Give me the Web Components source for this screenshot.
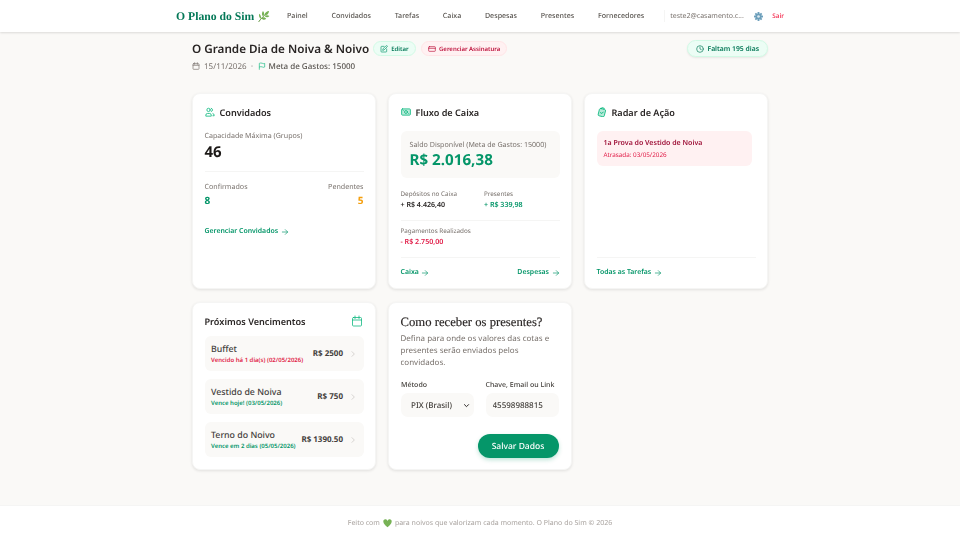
<!DOCTYPE html>
<html lang="pt-BR">
<head>
<meta charset="utf-8">
<title>O Plano do Sim</title>
<style>
  html, body { margin: 0; padding: 0; height: 100%; }
  body {
    background: #faf9f7;
    color: #292524;
    font-family: "Noto Sans", sans-serif;
    text-rendering: geometricPrecision;
    display: flex;
    flex-direction: column;
    min-height: 540px;
    overflow: hidden;
  }
  main-area { flex: 1; display: block; }
  /* the reference is a soft, downscaled capture */
  top-nav, main-area, page-foot { filter: blur(.3px); }
</style>
</head>
<body>
<top-nav></top-nav>
<main-area>
  <page-head></page-head>
  <div style="display:grid;grid-template-columns:repeat(3,184px);gap:13px 12px;width:576px;margin:0 auto;align-items:start">
    <guests-card></guests-card>
    <cash-card></cash-card>
    <radar-card></radar-card>
    <due-card></due-card>
    <gift-card></gift-card>
  </div>
</main-area>
<page-foot></page-foot>

<script>
const ICONS = {
  users: '<path d="M15 21v-1.5a4 4 0 0 0-4-4H6a4 4 0 0 0-4 4V21z"/><circle cx="8.5" cy="7" r="4"/><path d="M19 21h3v-1.5a4 4 0 0 0-3-3.87"/><path d="M15 3.13a4 4 0 0 1 0 7.75"/>',
  money: '<rect x="1.5" y="4.5" width="21" height="15" rx="2" fill="rgba(16,185,129,.28)"/><circle cx="12" cy="12" r="3.5"/><path d="M5.5 8.5h.01M18.5 15.5h.01"/>',
  tasks: '<g transform="rotate(14 12 12)"><rect x="4.5" y="4.5" width="15" height="18" rx="3" fill="rgba(16,185,129,.3)"/><path d="M9 4.5V2h6v2.5"/><path d="m9 14 2 2 4-4"/></g>',
  cal: '<rect x="3" y="5" width="18" height="17" rx="2"/><path d="M16 2v5M8 2v5M3 10h18"/>',
  edit: '<path d="M12 4H5a2 2 0 0 0-2 2v13a2 2 0 0 0 2 2h13a2 2 0 0 0 2-2v-7"/><path d="M18.5 2.5a2.1 2.1 0 0 1 3 3L12 15l-4 1 1-4z"/>',
  card: '<rect x="2" y="5" width="20" height="14" rx="2"/><path d="M2 10h20"/>',
  clock: '<circle cx="12" cy="12" r="10"/><path d="M12 6v6l4 2"/>',
  flag: '<path d="M4 22V4s2-1 5-1 5 2 8 2 3-1 3-1v11s-1 1-3 1-5-2-8-2-5 1-5 1"/>',
  arrow: '<path d="M4 12h16M13 5l7 7-7 7"/>',
  chev: '<path d="m9 5 7 7-7 7"/>',
  down: '<path d="m5 9 7 7 7-7"/>'
};
const icon = (name, size, color, sw = 2) =>
  `<svg width="${size}" height="${size}" viewBox="0 0 24 24" fill="none" stroke="${color}" stroke-width="${sw}" stroke-linecap="round" stroke-linejoin="round" style="flex:none;display:block">${ICONS[name]}</svg>`;

const CARD_CSS = `
  :host {
    display: flex;
    flex-direction: column;
    box-sizing: border-box;
    background: #fff;
    border: 1px solid #f5f5f4;
    border-radius: 8px;
    box-shadow: 0 1px 3px rgba(0,0,0,.1);
    padding: 10px 11.5px 10px;
    font-family: "Noto Sans", sans-serif;
    color: #292524;
  }
  .title { display: flex; align-items: center; gap: 5px; font-size: 9.1px; font-weight: 600; height: 16px; color: #292524; }
  .lbl { font-size: 7.1px; color: #78716c; line-height: 11px; }
  .link { display: flex; align-items: center; gap: 2.5px; font-size: 6.9px; font-weight: 600; color: #059669; line-height: 11px; }
  hr { border: 0; border-top: 1px solid #f5f5f4; margin: 0; }
`;

class TopNav extends HTMLElement {
  connectedCallback() {
    const links = ['Painel', 'Convidados', 'Tarefas', 'Caixa', 'Despesas', 'Presentes', 'Fornecedores'];
    this.attachShadow({ mode: 'open' }).innerHTML = `
      <style>
        :host { display: flex; justify-content: center; height: 32px; background: #fff; box-shadow: 0 1px 2px rgba(0,0,0,.12); font-family: "Noto Sans", sans-serif; position: relative; }
        .in { width: 608px; display: flex; align-items: center; }
        .logo { flex: none; font-family: "Liberation Serif", serif; font-weight: 700; font-size: 11.7px; color: #047857; width: 111px; white-space: nowrap; display: flex; align-items: center; gap: 3px; }
        ul { flex: none; display: flex; gap: 23.7px; list-style: none; margin: 0; padding: 0; font-size: 7.1px; font-weight: 500; color: #57534e; }
        .user { flex: none; display: flex; align-items: center; margin-left: 20px; border-left: 1px solid #f5f5f4; height: 12px; padding-left: 5px; font-size: 7px; color: #78716c; }
        .mail { width: 74px; white-space: nowrap; line-height: 12px; padding-top: 2px; }
        .out { font-size: 6.4px; font-weight: 600; color: #f43f5e; margin-left: 9px; padding-bottom: 2px; }
        .gear { margin-left: 10px; }
      </style>
      <div class="in">
        <span class="logo">O Plano do Sim <svg width="13" height="13" viewBox="0 0 24 24"><path d="M3 22C8 15 13 10 21 3" stroke="#5c913b" stroke-width="1.8" fill="none"/><path d="M11 12c-3-3-2-7 0-10 3 3 3 7 0 10zM14 10c0-4 3-7 8-8 0 5-3 8-8 8zM14 11c3-2 6-2 9 0-3 3-6 3-9 0zM7 16c-3-2-4-6-3-9 3 2 4 6 3 9zM8 15c3-2 6-2 9 1-3 3-7 2-9-1z" fill="#77b255"/></svg></span>
        <ul>${links.map(l => `<li>${l}</li>`).join('')}</ul>
        <div class="user">
          <span class="mail">teste2@casamento.c...</span>
          <span class="gear"><svg width="9" height="9" viewBox="0 0 24 24" style="display:block"><g fill="#6d9fbb"><circle cx="12" cy="12" r="8"/><rect x="9.5" y="0" width="5" height="24" rx="1"/><rect x="9.5" y="0" width="5" height="24" rx="1" transform="rotate(45 12 12)"/><rect x="9.5" y="0" width="5" height="24" rx="1" transform="rotate(90 12 12)"/><rect x="9.5" y="0" width="5" height="24" rx="1" transform="rotate(135 12 12)"/></g><circle cx="12" cy="12" r="3.5" fill="#dfeaf0"/></svg></span>
          <span class="out">Sair</span>
        </div>
      </div>`;
  }
}

class PageHead extends HTMLElement {
  connectedCallback() {
    this.attachShadow({ mode: 'open' }).innerHTML = `
      <style>
        :host { display: block; width: 576px; margin: 0 auto; padding: 8px 0 21px; font-family: "Noto Sans", sans-serif; }
        .row { display: flex; align-items: center; height: 17px; }
        h1 { margin: 0; font-size: 11.7px; font-weight: 600; color: #292524; white-space: nowrap; }
        .pill { display: inline-flex; align-items: center; gap: 3px; border-radius: 99px; height: 15px; box-sizing: border-box; padding: 0 6px; font-size: 6px; font-weight: 600; margin-left: 5.5px; white-space: nowrap; }
        .ed { background: #ecfdf5; border: 1px solid #d1fae5; color: #047857; margin-left: 4px; }
        .sub { background: #fff1f2; border: 1px solid #ffe4e6; color: #be123c; }
        .left { margin-left: auto; height: 17px; background: #ecfdf5; border: 1px solid #d1fae5; color: #047857; font-size: 6.8px; padding: 0 8px; box-shadow: 0 1px 2px rgba(0,0,0,.08); }
        .meta { display: flex; align-items: center; margin-top: 3px; font-size: 8px; color: #78716c; height: 12px; }
        .goal { color: #57534e; font-weight: 500; margin-left: 3px; }
        .dot { margin: 0 4px; color: #d6d3d1; }
      </style>
      <div class="row">
        <h1>O Grande Dia de Noiva &amp; Noivo</h1>
        <span class="pill ed">${icon('edit', 8, '#059669')}Editar</span>
        <span class="pill sub">${icon('card', 8, '#be123c')}Gerenciar Assinatura</span>
        <span class="pill left">${icon('clock', 8, '#047857')}Faltam 195 dias</span>
      </div>
      <div class="meta">
        ${icon('cal', 8, '#78716c')}<span style="margin-left:4px">15/11/2026</span>
        <span class="dot">•</span>
        ${icon('flag', 8, '#10b981')}<span class="goal">Meta de Gastos: 15000</span>
      </div>`;
  }
}

class GuestsCard extends HTMLElement {
  connectedCallback() {
    this.attachShadow({ mode: 'open' }).innerHTML = `
      <style>${CARD_CSS}
        :host { height: 196px; }
        .big { font-size: 15px; font-weight: 700; color: #1c1917; line-height: 20px; }
        .two { display: flex; justify-content: space-between; }
        .n { font-size: 10px; font-weight: 700; line-height: 14px; }
      </style>
      <div class="title">${icon('users', 10, '#10b981')}Convidados</div>
      <div class="lbl" style="margin-top:11px">Capacidade Máxima (Grupos)</div>
      <div class="big">46</div>
      <hr style="margin:9px 0 10px">
      <div class="two">
        <div><div class="lbl">Confirmados</div><div class="n" style="color:#059669">8</div></div>
        <div style="text-align:right"><div class="lbl">Pendentes</div><div class="n" style="color:#f59e0b">5</div></div>
      </div>
      <div style="margin-top:19px;display:flex"><span class="link">Gerenciar Convidados ${icon('arrow', 8, '#059669')}</span></div>`;
  }
}

class CashCard extends HTMLElement {
  connectedCallback() {
    this.attachShadow({ mode: 'open' }).innerHTML = `
      <style>${CARD_CSS}
        :host { height: 196px; }
        .box { background: #faf9f7; border-radius: 6px; padding: 9px 9px 0; margin-top: 11px; height: 47px; box-sizing: border-box; }
        .box .lbl { white-space: nowrap; }
        .val { font-size: 15.2px; font-weight: 700; color: #059669; line-height: 19px; }
        .sm { font-size: 6.3px; color: #78716c; line-height: 10px; }
        .amt { font-size: 7.1px; font-weight: 600; line-height: 11px; margin-top: 1px; }
        .grid { display: grid; grid-template-columns: 83.5px 1fr; margin: 11px 0 9px; }
        .foot { margin-top: auto; border-top: 1px solid #f5f5f4; padding-top: 9px; display: flex; justify-content: space-between; }
      </style>
      <div class="title">${icon('money', 10, '#10b981')}Fluxo de Caixa</div>
      <div class="box">
        <div class="lbl">Saldo Disponível (Meta de Gastos: 15000)</div>
        <div class="val">R$ 2.016,38</div>
      </div>
      <div class="grid">
        <div><div class="sm">Depósitos no Caixa</div><div class="amt">+ R$ 4.426,40</div></div>
        <div><div class="sm">Presentes</div><div class="amt" style="color:#059669">+ R$ 339,98</div></div>
      </div>
      <hr>
      <div style="margin-top:5px"><div class="sm">Pagamentos Realizados</div><div class="amt" style="color:#e11d48">- R$ 2.750,00</div></div>
      <div class="foot">
        <span class="link">Caixa ${icon('arrow', 8, '#059669')}</span>
        <span class="link">Despesas ${icon('arrow', 8, '#059669')}</span>
      </div>`;
  }
}

class RadarCard extends HTMLElement {
  connectedCallback() {
    this.attachShadow({ mode: 'open' }).innerHTML = `
      <style>${CARD_CSS}
        :host { height: 196px; }
        .alert { background: #fff1f2; border-radius: 6px; margin: 11px 4px 0 0; padding: 7px; height: 35px; box-sizing: border-box; }
        .t { font-size: 7px; font-weight: 600; color: #9f1239; line-height: 11px; }
        .d { font-size: 6.3px; color: #e11d48; line-height: 10px; margin-top: 1px; }
        .foot { margin-top: auto; border-top: 1px solid #f5f5f4; padding-top: 9px; display: flex; }
      </style>
      <div class="title">${icon('tasks', 10, '#10b981')}Radar de Ação</div>
      <div class="alert">
        <div class="t">1a Prova do Vestido de Noiva</div>
        <div class="d">Atrasada: 03/05/2026</div>
      </div>
      <div class="foot"><span class="link">Todas as Tarefas ${icon('arrow', 8, '#059669')}</span></div>`;
  }
}

class DueItem extends HTMLElement {
  connectedCallback() {
    const late = this.hasAttribute('late');
    this.attachShadow({ mode: 'open' }).innerHTML = `
      <style>
        :host { display: flex; align-items: center; background: #faf9f7; border-radius: 6px; height: 35px; padding: 0 6.5px; font-family: "Noto Sans", sans-serif; opacity: .999; }
        .l { flex: 1; min-width: 0; }
        .n { font-size: 8.8px; font-weight: 500; color: #44403c; line-height: 12px; }
        .s { font-size: 6px; font-weight: 600; line-height: 9px; margin-top: 1px; white-space: nowrap; color: ${late ? '#e11d48' : '#059669'}; }
        .p { font-size: 8px; font-weight: 700; color: #44403c; white-space: nowrap; margin-right: 6px; }
      </style>
      <div class="l"><div class="n">${this.getAttribute('name')}</div><div class="s">${this.getAttribute('note')}</div></div>
      <div class="p">${this.getAttribute('price')}</div>
      ${icon('chev', 8, '#c4c0bc')}`;
  }
}

class DueCard extends HTMLElement {
  connectedCallback() {
    this.attachShadow({ mode: 'open' }).innerHTML = `
      <style>${CARD_CSS}
        :host { height: 168px; }
        .hd { display: flex; justify-content: space-between; align-items: center; margin-bottom: 7px; padding-right: 1px; }
        .list { display: flex; flex-direction: column; gap: 8px; }
      </style>
      <div class="hd"><div class="title">Próximos Vencimentos</div>${icon('cal', 12, '#10b981', 1.6)}</div>
      <div class="list"><slot></slot></div>`;
    this.innerHTML = `
      <due-item name="Buffet" late note="Vencido há 1 dia(s) (02/05/2026)" price="R$ 2500"></due-item>
      <due-item name="Vestido de Noiva" note="Vence hoje! (03/05/2026)" price="R$ 750"></due-item>
      <due-item name="Terno do Noivo" note="Vence em 2 dias (05/05/2026)" price="R$ 1390.50"></due-item>`;
  }
}

class GiftCard extends HTMLElement {
  connectedCallback() {
    this.attachShadow({ mode: 'open' }).innerHTML = `
      <style>${CARD_CSS}
        :host { height: 168px; }
        h3 { margin: 1px 0 0; font-family: "Liberation Serif", serif; font-weight: 400; font-size: 12.7px; -webkit-text-stroke: .15px #292524; color: #292524; line-height: 17px; white-space: nowrap; }
        p { margin: 2px 0 0; font-size: 8px; line-height: 12px; color: #78716c; }
        .form { display: grid; grid-template-columns: 73px 73px; margin-top: 12px; justify-content: space-between; padding: 0 1px 0 .5px; }
        label { display: block; font-size: 7px; font-weight: 500; color: #44403c; line-height: 10px; white-space: nowrap; }
        .sel { position: relative; margin-top: 2px; }
        .sel svg { position: absolute; right: 4px; top: 9px; }
        select, input { display: block; width: 100%; box-sizing: border-box; height: 24px; border: 0; border-radius: 7px; background: #faf9f7; font: 500 8px "Noto Sans", sans-serif; color: #44403c; padding: 0 7px; outline: none; text-rendering: geometricPrecision; }
        input { margin-top: 2px; }
        select { appearance: none; padding: 0 10px; }
        .btn { align-self: flex-end; margin: 17px 1px 0 0; width: 81px; height: 24px; border: 0; border-radius: 99px; background: #059669; color: #fff; font: 500 8.5px "Noto Sans", sans-serif; box-shadow: 0 2px 4px rgba(5,150,105,.25); text-rendering: geometricPrecision; }
      </style>
      <h3>Como receber os presentes?</h3>
      <p>Defina para onde os valores das cotas e presentes serão enviados pelos convidados.</p>
      <div class="form">
        <div><label>Método</label><div class="sel"><select><option>PIX (Brasil)</option></select>${icon('down', 7, '#292524', 3.4)}</div></div>
        <div><label>Chave, Email ou Link</label><input value="45598988815"></div>
      </div>
      <button class="btn">Salvar Dados</button>`;
  }
}

class PageFoot extends HTMLElement {
  connectedCallback() {
    this.attachShadow({ mode: 'open' }).innerHTML = `
      <style>
        :host { display: flex; height: 34px; align-items: center; justify-content: center; background: #fff; border-top: 1px solid #f5f5f4; font-family: "Noto Sans", sans-serif; font-size: 7px; color: #a8a29e; gap: 3px; }
      </style>
      Feito com <svg width="9" height="9" viewBox="0 0 24 24"><path d="M12 22C5 16 1 12 1 7.5A5.5 5.5 0 0 1 12 5a5.5 5.5 0 0 1 11 2.5C23 12 19 16 12 22z" fill="#77b255"/></svg> para noivos que valorizam cada momento. O Plano do Sim © 2026`;
  }
}

customElements.define('top-nav', TopNav);
customElements.define('page-head', PageHead);
customElements.define('guests-card', GuestsCard);
customElements.define('cash-card', CashCard);
customElements.define('radar-card', RadarCard);
customElements.define('due-item', DueItem);
customElements.define('due-card', DueCard);
customElements.define('gift-card', GiftCard);
customElements.define('page-foot', PageFoot);
</script>
</body>
</html>
